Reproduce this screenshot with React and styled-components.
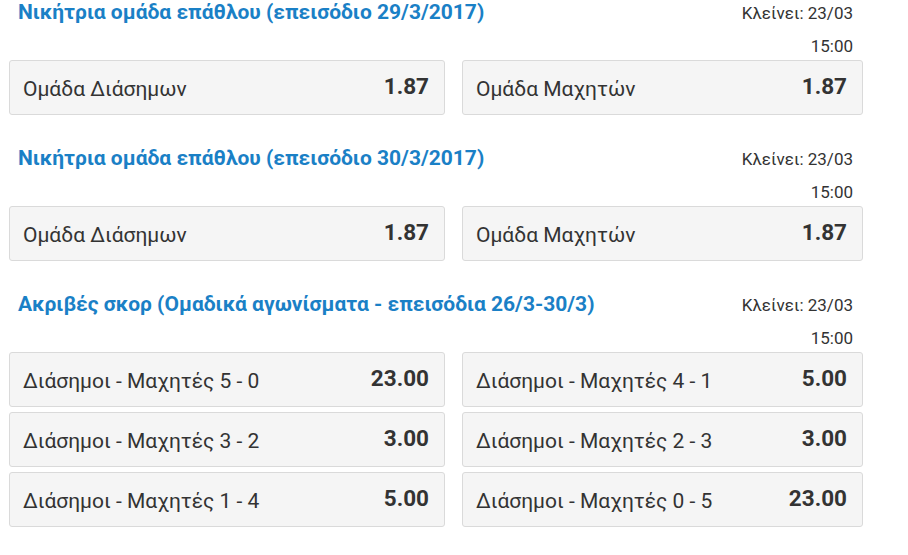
import React from "react";
import styled, { createGlobalStyle } from "styled-components";

const GlobalStyle = createGlobalStyle`
  body {
    margin: 0;
    background: #fff;
    font-family: Roboto, "Noto Sans", Arial, sans-serif;
    color: #333;
  }
`;

const Page = styled.div`
  width: 854px;
  padding-left: 9px;
`;

const Section = styled.section`
  margin-bottom: 31px;
`;

const Header = styled.div`
  display: flex;
  justify-content: space-between;
  height: 60px;
`;

const Title = styled.h2`
  margin: 0;
  padding-left: 9px;
  font-size: 21px;
  line-height: 25px;
  font-weight: 700;
  color: #1a80c6;
`;

const CloseInfo = styled.div`
  margin-top: -3px;
  padding-right: 10px;
  font-size: 17px;
  line-height: 33px;
  text-align: right;
  color: #333;
`;

const Grid = styled.div`
  display: grid;
  grid-template-columns: 436px 401px;
  column-gap: 17px;
  row-gap: 5px;
`;

const Card = styled.div`
  display: flex;
  align-items: center;
  justify-content: space-between;
  height: 55px;
  box-sizing: border-box;
  padding: 0 15px 0 13px;
  background: #f5f5f5;
  border: 1px solid #dadada;
  border-radius: 3px;
`;

const Label = styled.span`
  font-size: 21px;
  padding-top: 3px;
  color: #333;
`;

const Odds = styled.span`
  font-size: 22.5px;
  font-weight: 700;
  padding-bottom: 3px;
  color: #333;
`;

const sections = [
  {
    title: "Νικήτρια ομάδα επάθλου (επεισόδιο 29/3/2017)",
    picks: [
      ["Ομάδα Διάσημων", "1.87"],
      ["Ομάδα Μαχητών", "1.87"],
    ],
  },
  {
    title: "Νικήτρια ομάδα επάθλου (επεισόδιο 30/3/2017)",
    picks: [
      ["Ομάδα Διάσημων", "1.87"],
      ["Ομάδα Μαχητών", "1.87"],
    ],
  },
  {
    title: "Ακριβές σκορ (Ομαδικά αγωνίσματα - επεισόδια 26/3-30/3)",
    picks: [
      ["Διάσημοι - Μαχητές 5 - 0", "23.00"],
      ["Διάσημοι - Μαχητές 4 - 1", "5.00"],
      ["Διάσημοι - Μαχητές 3 - 2", "3.00"],
      ["Διάσημοι - Μαχητές 2 - 3", "3.00"],
      ["Διάσημοι - Μαχητές 1 - 4", "5.00"],
      ["Διάσημοι - Μαχητές 0 - 5", "23.00"],
    ],
  },
];

const App = () => (
  <Page>
    <GlobalStyle />
    {sections.map((s) => (
      <Section key={s.title}>
        <Header>
          <Title>{s.title}</Title>
          <CloseInfo>
            <div>Κλείνει: 23/03</div>
            <div>15:00</div>
          </CloseInfo>
        </Header>
        <Grid>
          {s.picks.map(([name, odds]) => (
            <Card key={name}>
              <Label>{name}</Label>
              <Odds>{odds}</Odds>
            </Card>
          ))}
        </Grid>
      </Section>
    ))}
  </Page>
);

export default App;
